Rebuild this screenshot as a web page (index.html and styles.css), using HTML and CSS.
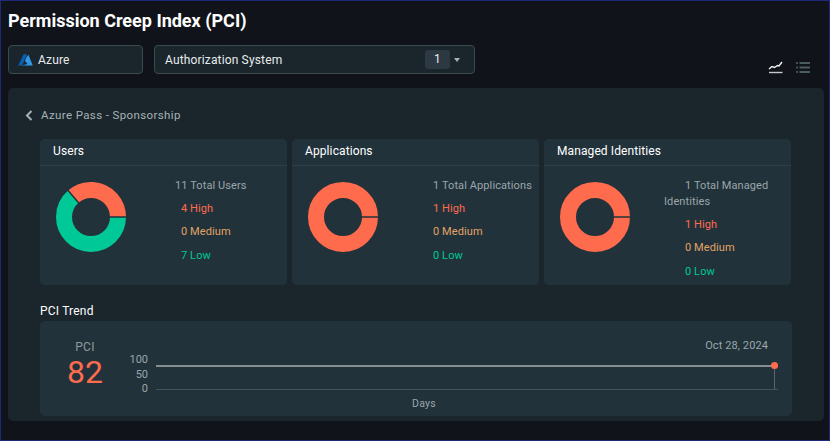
FILE: index.html
```html
<!DOCTYPE html>
<html lang="en">

<head>
    <meta charset="UTF-8">
    <title>Permission Creep Index (PCI)</title>
    <link rel="stylesheet" href="styles.css">
</head>

<body>
    <div class="window">
        <h1>Permission Creep Index (PCI)</h1>

        <div class="toolbar">
            <div class="select select-cloud">
                <svg class="azure-logo" width="15" height="12" viewBox="0 0 15 12">
                    <path d="M5.6 0.3H9L4.2 11.4H0.2Z" fill="#0a5fb4"></path>
                    <path d="M8.4 3.3L10.4 0.8L14.8 11.4H3.6L9.6 10L7 7Z" fill="#2f9be8"></path>
                </svg>
                <span>Azure</span>
            </div>
            <div class="select select-system">
                <span>Authorization System</span>
                <span class="count-badge">1</span>
                <span class="caret"></span>
            </div>
            <div class="view-icons">
                <svg width="15" height="13" viewBox="0 0 15 13">
                    <path d="M1 8L4 5.5L6.5 6.5L9.5 4.5L11 5L14 1" fill="none" stroke="#f2f5f5" stroke-width="1.4"></path>
                    <path d="M1 11.5H14.5" stroke="#c4cacb" stroke-width="1.4"></path>
                </svg>
                <svg width="15" height="13" viewBox="0 0 15 13">
                    <path d="M1 2H3M1 6.5H3M1 11H3" stroke="#3b4f55" stroke-width="2"></path>
                    <path d="M4.5 2H15M4.5 6.5H15M4.5 11H15" stroke="#4a5d62" stroke-width="2"></path>
                </svg>
            </div>
        </div>

        <section class="panel">
            <div class="breadcrumb">
                <svg width="8" height="11" viewBox="0 0 8 11">
                    <path d="M6.5 1L2 5.5L6.5 10" fill="none" stroke="#a7b1b4" stroke-width="2"></path>
                </svg>
                <span>Azure Pass - Sponsorship</span>
            </div>

            <div class="cards">
                <div class="card">
                    <div class="card-title">Users</div>
                    <div class="card-body">
                        <svg class="donut" width="70" height="70" viewBox="0 0 70 70">
                            <circle class="ring ring-low" cx="35" cy="35" r="27" pathLength="11" stroke-dasharray="7 4"></circle>
                            <circle class="ring ring-high" cx="35" cy="35" r="27" pathLength="11" stroke-dasharray="4 7" transform="rotate(229 35 35)"></circle>
                            <path class="ring-gap" d="M50 35H71M23.2 21.4L11.4 7.8"></path>
                        </svg>
                        <div class="stats stats-users">
                            <p class="stat-total">11 Total Users</p>
                            <p class="stat high">4 High</p>
                            <p class="stat medium">0 Medium</p>
                            <p class="stat low">7 Low</p>
                        </div>
                    </div>
                </div>

                <div class="card">
                    <div class="card-title">Applications</div>
                    <div class="card-body">
                        <svg class="donut" width="70" height="70" viewBox="0 0 70 70">
                            <circle class="ring ring-high" cx="35" cy="35" r="27"></circle>
                            <path class="ring-gap" d="M50 35H71"></path>
                        </svg>
                        <div class="stats">
                            <p class="stat-total">1 Total Applications</p>
                            <p class="stat high">1 High</p>
                            <p class="stat medium">0 Medium</p>
                            <p class="stat low">0 Low</p>
                        </div>
                    </div>
                </div>

                <div class="card">
                    <div class="card-title">Managed Identities</div>
                    <div class="card-body">
                        <svg class="donut" width="70" height="70" viewBox="0 0 70 70">
                            <circle class="ring ring-high" cx="35" cy="35" r="27"></circle>
                            <path class="ring-gap" d="M50 35H71"></path>
                        </svg>
                        <div class="stats stats-wrapped">
                            <p class="stat-total">1 Total Managed Identities</p>
                            <p class="stat high">1 High</p>
                            <p class="stat medium">0 Medium</p>
                            <p class="stat low">0 Low</p>
                        </div>
                    </div>
                </div>
            </div>

            <h2>PCI Trend</h2>
            <div class="trend">
                <div class="score">
                    <div class="score-label">PCI</div>
                    <div class="score-value">82</div>
                </div>
                <div class="axis">
                    <span>100</span>
                    <span>50</span>
                    <span>0</span>
                </div>
                <div class="plot">
                    <div class="plot-date">Oct 28, 2024</div>
                    <div class="plot-area">
                        <div class="plot-line"></div>
                        <div class="plot-marker"></div>
                        <div class="plot-dot"></div>
                    </div>
                    <div class="plot-days">Days</div>
                </div>
            </div>
        </section>
    </div>
</body>

</html>
```

FILE: styles.css
```css
* {
    box-sizing: border-box;
}

body {
    margin: 0;
    font-family: Roboto, "Liberation Sans", sans-serif;
    background: #10141a;
    color: #fff;
}

p {
    margin: 0;
}

.window {
    width: 830px;
    height: 441px;
    padding: 0 5px 0 7px;
    border: 1px solid #1e2a78;
    background: #10141a;
    overflow: hidden;
}

h1 {
    margin: 0;
    padding-top: 8px;
    height: 44px;
    font-size: 18px;
    line-height: 23px;
    font-weight: 700;
}

.toolbar {
    display: flex;
    align-items: flex-start;
    height: 43px;
}

.select {
    display: flex;
    align-items: center;
    height: 29px;
    border: 1px solid #3b4a50;
    border-radius: 4px;
    background: #1a262c;
    font-size: 12px;
    letter-spacing: 0.15px;
    color: #e8ecec;
}

.select-cloud {
    width: 135px;
    padding-left: 9px;
    gap: 5px;
}

.select-system {
    width: 321px;
    margin-left: 11px;
    padding-left: 10px;
}

.select-system span:first-child {
    flex: 1;
}

.count-badge {
    width: 25px;
    height: 19px;
    border-radius: 3px;
    background: #2c3842;
    text-align: center;
    line-height: 19px;
}

.caret {
    width: 0;
    height: 0;
    margin: 0 14px 0 4px;
    border-left: 3.5px solid transparent;
    border-right: 3.5px solid transparent;
    border-top: 4px solid #a8b0b3;
}

.view-icons {
    display: flex;
    gap: 12px;
    margin-left: auto;
    margin-top: 16px;
    padding-right: 14px;
}

.panel {
    width: 816px;
    height: 333px;
    padding: 0 32px;
    border-radius: 5px;
    background: #1a262c;
}

.breadcrumb {
    display: flex;
    align-items: center;
    gap: 8px;
    height: 51px;
    margin-left: -15px;
    padding-top: 3px;
    font-size: 11.5px;
    letter-spacing: 0.38px;
    color: #a7b1b4;
}

.cards {
    display: grid;
    grid-template-columns: repeat(3, 247px);
    gap: 5px;
}

.card {
    height: 146px;
    border-radius: 5px;
    background: #22323b;
}

.card-title {
    height: 27px;
    padding: 5px 13px 0;
    border-bottom: 1px solid #2e3f47;
    font-size: 12px;
    line-height: 14px;
    letter-spacing: 0.1px;
}

.card-body {
    display: flex;
    padding-left: 16px;
}

.donut {
    flex: none;
    margin-top: 16px;
}

.ring {
    fill: none;
    stroke-width: 16;
}

.ring-high {
    stroke: #ff6b4d;
}

.ring-low {
    stroke: #00c896;
}

.ring-gap {
    fill: none;
    stroke: #22323b;
    stroke-width: 1.5;
}

.stats {
    margin-left: 55px;
    padding-top: 12px;
    font-size: 11px;
    line-height: 16px;
    letter-spacing: 0.1px;
}

.stat-total {
    margin-bottom: 7px;
    color: #9aa6aa;
}

.stat {
    margin-bottom: 7.4px;
}

.high {
    color: #ff6b4d;
}

.medium {
    color: #e0a365;
}

.low {
    color: #00c896;
}

.stats-users {
    margin-left: 49px;
}

.stats-users .stat {
    padding-left: 6px;
}

.stats-wrapped {
    margin-left: 34px;
}

.stats-wrapped .stat-total {
    text-indent: 21px;
}

.stats-wrapped .stat {
    padding-left: 21px;
}

h2 {
    margin: 0;
    height: 36px;
    padding-top: 19px;
    font-size: 12px;
    line-height: 14px;
    font-weight: 400;
    letter-spacing: 0.2px;
}

.trend {
    display: flex;
    width: 752px;
    height: 95px;
    border-radius: 5px;
    background: #22323b;
}

.score {
    width: 90px;
    padding-top: 19px;
    text-align: center;
}

.score-label {
    font-size: 12px;
    line-height: 14px;
    letter-spacing: 0.3px;
    color: #8e9a9f;
}

.score-value {
    font-size: 32px;
    line-height: 37px;
    color: #ff6b4d;
}

.axis {
    display: flex;
    flex-direction: column;
    align-items: flex-end;
    width: 18px;
    padding-top: 32px;
    font-size: 11px;
    line-height: 14.5px;
    color: #9aa6aa;
}

.plot {
    position: relative;
    width: 622px;
    margin-left: 8px;
}

.plot-date {
    height: 44px;
    padding-top: 18px;
    padding-right: 10px;
    text-align: right;
    font-size: 11px;
    line-height: 14px;
    letter-spacing: 0.1px;
    color: #9aa6aa;
}

.plot-area {
    position: relative;
    height: 25px;
    border-bottom: 1px solid #465257;
}

.plot-line {
    height: 2px;
    background: #858f90;
}

.plot-marker {
    position: absolute;
    top: 0;
    right: 3px;
    width: 1px;
    height: 24px;
    background: #596569;
}

.plot-dot {
    position: absolute;
    top: -3px;
    right: 0;
    width: 7px;
    height: 7px;
    border-radius: 50%;
    background: #ff6b4d;
}

.plot-days {
    margin-top: 8px;
    padding-right: 86px;
    text-align: center;
    font-size: 10.5px;
    line-height: 12px;
    letter-spacing: 0.3px;
    color: #9aa6aa;
}
```
